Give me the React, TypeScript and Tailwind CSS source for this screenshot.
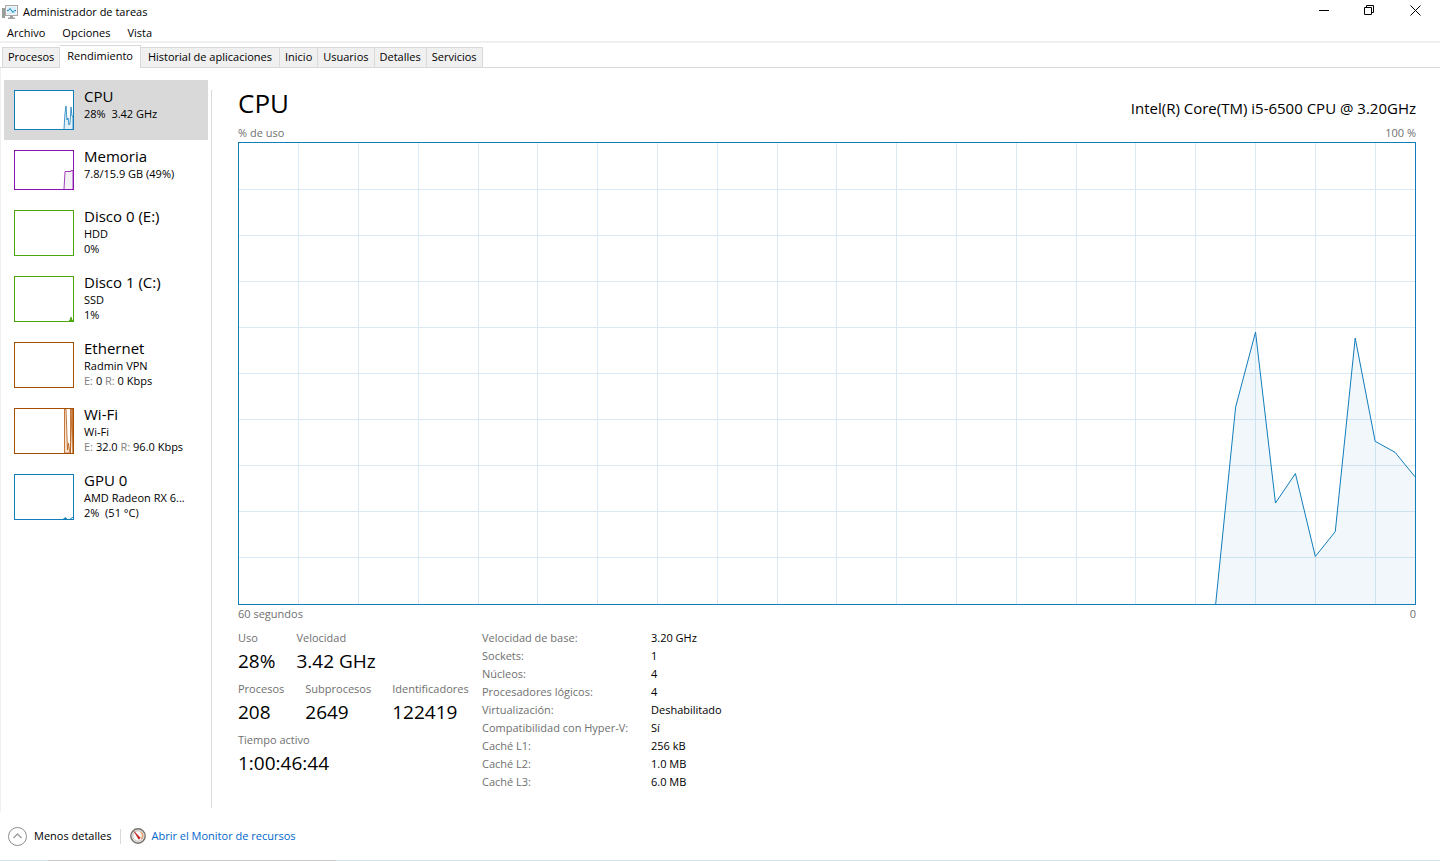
import { useState } from "react";
import clsx from "clsx";

type Sparkline = {
  height: string;
  viewHeight: number;
  stroke: string;
  fill: string;
  border: string;
  paths: string[];
};

type Resource = {
  name: string;
  lines: React.ReactNode[];
  chart: Sparkline;
};

const tabs = [
  "Procesos",
  "Rendimiento",
  "Historial de aplicaciones",
  "Inicio",
  "Usuarios",
  "Detalles",
  "Servicios",
];

const resources: Resource[] = [
  {
    name: "CPU",
    lines: ["28%  3.42 GHz"],
    chart: {
      height: "h-10",
      viewHeight: 38,
      stroke: "#117dbb",
      fill: "#e3eff7",
      border: "border-[#117dbb]",
      paths: ["M49 38 L50 22 L51 15 L52 29 L53 27 L54 34 L55 32 L56 16 L57 25 L58 26 L58 38"],
    },
  },
  {
    name: "Memoria",
    lines: ["7.8/15.9 GB (49%)"],
    chart: {
      height: "h-10",
      viewHeight: 38,
      stroke: "#8b12ae",
      fill: "#f4f2f4",
      border: "border-[#8b12ae]",
      paths: ["M49 38 L50 20.5 L56 20.5 L56 19.5 L58 19.5 L58 38"],
    },
  },
  {
    name: "Disco 0 (E:)",
    lines: ["HDD", "0%"],
    chart: {
      height: "h-[46px]",
      viewHeight: 44,
      stroke: "#4da60c",
      fill: "#eff7e9",
      border: "border-[#4da60c]",
      paths: [],
    },
  },
  {
    name: "Disco 1 (C:)",
    lines: ["SSD", "1%"],
    chart: {
      height: "h-[46px]",
      viewHeight: 44,
      stroke: "#4da60c",
      fill: "#4da60c",
      border: "border-[#4da60c]",
      paths: ["M54 44 L55 43 L56 40 L57 43 L58 44"],
    },
  },
  {
    name: "Ethernet",
    lines: ["Radmin VPN", <Rates key="rates" sent="0" received="0 Kbps" />],
    chart: {
      height: "h-[46px]",
      viewHeight: 44,
      stroke: "#a74f01",
      fill: "#f6ece2",
      border: "border-[#a74f01]",
      paths: [],
    },
  },
  {
    name: "Wi-Fi",
    lines: ["Wi-Fi", <Rates key="rates" sent="32.0" received="96.0 Kbps" />],
    chart: {
      height: "h-[46px]",
      viewHeight: 44,
      stroke: "#b85a12",
      fill: "#f6dfcd",
      border: "border-[#a74f01]",
      paths: ["M49.5 44 V0 H51 L52.5 41 L53.5 34 L54.5 42 L55.5 44 Z", "M55.5 44 V0 H58 V44 L57 0 Z"],
    },
  },
  {
    name: "GPU 0",
    lines: ["AMD Radeon RX 6...", "2%  (51 °C)"],
    chart: {
      height: "h-[46px]",
      viewHeight: 44,
      stroke: "#117dbb",
      fill: "#117dbb",
      border: "border-[#117dbb]",
      paths: ["M48.5 44 L50 42.5 L52 44", "M55 44 L57 43 L58 42"],
    },
  },
];

const specs = [
  ["Velocidad de base:", "3.20 GHz"],
  ["Sockets:", "1"],
  ["Núcleos:", "4"],
  ["Procesadores lógicos:", "4"],
  ["Virtualización:", "Deshabilitado"],
  ["Compatibilidad con Hyper-V:", "Sí"],
  ["Caché L1:", "256 kB"],
  ["Caché L2:", "1.0 MB"],
  ["Caché L3:", "6.0 MB"],
];

// One entry per second, newest last. Values are % of use.
const usage = [0, 42.7, 59, 21.9, 28.3, 10.3, 15.7, 57.7, 35.3, 32.9, 27.6];

const CHART_W = 1180;
const CHART_H = 460;
const SECONDS = 59;

function Rates({ sent, received }: { sent: string; received: string }) {
  return (
    <>
      <span className="text-[#808080]">E:</span> {sent} <span className="text-[#808080]">R:</span>{" "}
      {received}
    </>
  );
}

function TaskManagerIcon() {
  return (
    <svg className="h-4 w-4" viewBox="0 0 16 16" aria-hidden>
      <rect x="0" y="4" width="3" height="10" fill="#9b9b9b" />
      <path d="M1 6h1M1 12h1" stroke="#5fd35f" />
      <rect x="3.5" y="1.5" width="12" height="10" fill="#f4f4f4" stroke="#a9a9a9" />
      <rect x="5" y="3" width="9" height="7" fill="#d8f1fc" />
      <path d="M5 6.5h1.5l1.5-2 3 4 1.5-2H14" fill="none" stroke="#1783b8" />
      <path d="M8 12h3v1.5h2V15H6v-1.5h2z" fill="#a0a0a0" />
    </svg>
  );
}

function MonitorIcon() {
  return (
    <svg className="h-4 w-4" viewBox="0 0 16 16" aria-hidden>
      <circle cx="8" cy="8" r="7.2" fill="#e8e8e4" stroke="#77716d" strokeWidth="1.4" />
      <circle cx="8" cy="8" r="5.2" fill="#fafafa" stroke="#c9c5c0" />
      <path d="M10.5 4.2a4.4 4.4 0 0 1 .8 6.8" fill="none" stroke="#ee9a62" strokeWidth="1.3" />
      <path d="M4.2 3.6l6.2 6.4-1.6 1.2z" fill="#d0181b" stroke="#b51518" strokeWidth=".6" />
    </svg>
  );
}

function WindowButtons() {
  return (
    <div className="flex pr-0.5">
      <button type="button" aria-label="Minimizar" className="flex h-[21px] w-[46px] items-center justify-center">
        <svg className="h-[11px] w-[11px]" viewBox="0 0 11 11" stroke="#000" fill="none">
          <path d="M1 5.5h10" />
        </svg>
      </button>
      <button type="button" aria-label="Restaurar" className="flex h-[21px] w-[46px] items-center justify-center">
        <svg className="h-[11px] w-[11px]" viewBox="0 0 11 11" stroke="#000" fill="none">
          <path d="M.5 2.5h7v7h-7zM2.5 2.5v-2h7v7h-2" />
        </svg>
      </button>
      <button type="button" aria-label="Cerrar" className="flex h-[21px] w-[46px] items-center justify-center">
        <svg className="h-[11px] w-[11px]" viewBox="0 0 11 11" stroke="#000" fill="none">
          <path d="M.5 .5l10 10M10.5 .5l-10 10" />
        </svg>
      </button>
    </div>
  );
}

function MiniChart({ chart }: { chart: Sparkline }) {
  return (
    <div className={clsx("w-[60px] shrink-0 border bg-white", chart.height, chart.border)}>
      <svg className="block h-full w-full" viewBox={`0 0 58 ${chart.viewHeight}`} aria-hidden>
        {chart.paths.map((d) => (
          <path key={d} d={d} fill={chart.fill} stroke={chart.stroke} strokeWidth=".8" />
        ))}
      </svg>
    </div>
  );
}

function UsageChart() {
  const step = CHART_W / SECONDS;
  const first = SECONDS - usage.length + 1;
  const points = usage
    .map((v, i) => `${(first + i) * step},${CHART_H - (v / 100) * CHART_H}`)
    .join(" ");
  const columns = Array.from({ length: 19 }, (_, i) => (i + 1) * 3 * step);
  const rows = Array.from({ length: 9 }, (_, i) => ((i + 1) * CHART_H) / 10);

  return (
    <div className="flex min-h-64 flex-1 border border-[#117dbb]">
      <svg
        className="block h-auto w-full"
        height="256"
        viewBox={`0 0 ${CHART_W} ${CHART_H}`}
        preserveAspectRatio="none"
        role="img"
        aria-label="% de uso"
      >
        <g stroke="#d9eaf4" shapeRendering="crispEdges">
          {columns.map((x) => (
            <line key={x} x1={x} x2={x} y1="0" y2={CHART_H} vectorEffect="non-scaling-stroke" />
          ))}
          {rows.map((y) => (
            <line key={y} x1="0" x2={CHART_W} y1={y} y2={y} vectorEffect="non-scaling-stroke" />
          ))}
        </g>
        <polygon
          points={`${points} ${CHART_W},${CHART_H}`}
          fill="#117dbb"
          fillOpacity=".06"
        />
        <polyline
          points={points}
          fill="none"
          stroke="#117dbb"
          vectorEffect="non-scaling-stroke"
        />
      </svg>
    </div>
  );
}

function Stat({ label, value }: { label: string; value: string }) {
  return (
    <div>
      <dt className="leading-[18px] text-[#707070]">{label}</dt>
      <dd className="text-[19px] leading-7">{value}</dd>
    </div>
  );
}

export default function App() {
  const [tab, setTab] = useState("Rendimiento");
  const [selected, setSelected] = useState("CPU");

  return (
    <div className="flex min-h-screen flex-col bg-white font-['Open_Sans','Noto_Sans',sans-serif] text-[11px] text-black">
      <header>
        <div className="flex h-6 items-start justify-between">
          <h1 className="flex items-center gap-[5px] pt-1 pl-0.5 leading-4">
            <TaskManagerIcon />
            Administrador de tareas
          </h1>
          <WindowButtons />
        </div>
        <nav className="flex h-[17px] gap-[17px] pl-[7px]">
          {["Archivo", "Opciones", "Vista"].map((item) => (
            <button key={item} type="button" className="leading-[17px]">
              {item}
            </button>
          ))}
        </nav>
      </header>

      <div role="tablist" className="flex h-[27px] items-end border-t-2 border-b border-t-[#f0f0f0] border-b-[#d9d9d9] pl-0.5">
        {tabs.map((name) => (
          <button
            key={name}
            type="button"
            role="tab"
            aria-selected={tab === name}
            onClick={() => setTab(name)}
            className={clsx(
              "border-t border-r border-[#d9d9d9] whitespace-nowrap",
              name === tabs[0] && "border-l",
              tab === name
                ? "-mb-px h-[23px] bg-white px-[7px] pb-0.5"
                : "h-5 bg-[#f0f0f0] px-[5px]",
              name === "Historial de aplicaciones" && "px-[7px]",
            )}
          >
            {name}
          </button>
        ))}
      </div>

      <main className="flex flex-1 border-l border-[#f0f0f0]">
        <aside className="w-[207px] shrink-0 pt-3 pl-[3px]">
          {resources.map((r) => (
            <button
              key={r.name}
              type="button"
              aria-pressed={selected === r.name}
              onClick={() => setSelected(r.name)}
              className={clsx(
                "flex w-full gap-2.5 p-2.5 text-left",
                selected === r.name && "bg-[#d9d9d9]",
              )}
            >
              <MiniChart chart={r.chart} />
              <span className="-my-1 block min-w-0">
                <span className="block text-[15px] leading-5">{r.name}</span>
                {r.lines.map((line, i) => (
                  <span key={i} className="block leading-[15px] whitespace-pre">
                    {line}
                  </span>
                ))}
              </span>
            </button>
          ))}
        </aside>

        <section className="mt-[22px] mb-1 ml-[3px] flex min-w-0 flex-1 flex-col border-l border-[#d9d9d9] pr-6 pb-[17px] pl-[26px]">
          <div className="flex h-[35px] items-start justify-between">
            <h2 className="text-[26px] leading-[26px]">CPU</h2>
            <p className="pt-2 text-[15px] leading-5">Intel(R) Core(TM) i5-6500 CPU @ 3.20GHz</p>
          </div>
          <div className="flex justify-between pb-px leading-4 text-[#707070]">
            <span>% de uso</span>
            <span>100 %</span>
          </div>
          <UsageChart />
          <div className="flex justify-between leading-[18px] text-[#707070]">
            <span>60 segundos</span>
            <span>0</span>
          </div>

          <div className="flex gap-3 pt-1.5">
            <div className="flex w-[232px] flex-col gap-[5px]">
              <dl className="flex gap-[21px]">
                <Stat label="Uso" value="28%" />
                <Stat label="Velocidad" value="3.42 GHz" />
              </dl>
              <dl className="flex gap-[21px]">
                <Stat label="Procesos" value="208" />
                <Stat label="Subprocesos" value="2649" />
                <Stat label="Identificadores" value="122419" />
              </dl>
              <dl>
                <Stat label="Tiempo activo" value="1:00:46:44" />
              </dl>
            </div>
            <table className="self-start text-left leading-[18px]">
              <tbody>
                {specs.map(([label, value]) => (
                  <tr key={label}>
                    <th scope="row" className="w-[169px] p-0 font-normal whitespace-nowrap text-[#707070]">
                      {label}
                    </th>
                    <td className="p-0 whitespace-nowrap">{value}</td>
                  </tr>
                ))}
              </tbody>
            </table>
          </div>
        </section>
      </main>

      <footer>
        <div className="flex h-12 items-center pl-2">
          <button type="button" className="flex items-center gap-[7px]">
            <svg className="h-[19px] w-[19px]" viewBox="0 0 19 19" fill="none" aria-hidden>
              <circle cx="9.5" cy="9.5" r="9" stroke="#8c8c8c" />
              <path d="M5.5 11l4-4 4 4" stroke="#a0a0a0" strokeWidth="1.5" />
            </svg>
            Menos detalles
          </button>
          <span className="mx-[9px] h-[15px] w-px bg-[#d9d9d9]" />
          <a href="#monitor" className="flex items-center gap-[5px] text-[#0066cc]">
            <MonitorIcon />
            Abrir el Monitor de recursos
          </a>
        </div>
        <div className="flex h-px bg-[#d3e3ea]">
          <div className="ml-12 w-72 bg-[#c8c8c8]" />
        </div>
      </footer>
    </div>
  );
}
